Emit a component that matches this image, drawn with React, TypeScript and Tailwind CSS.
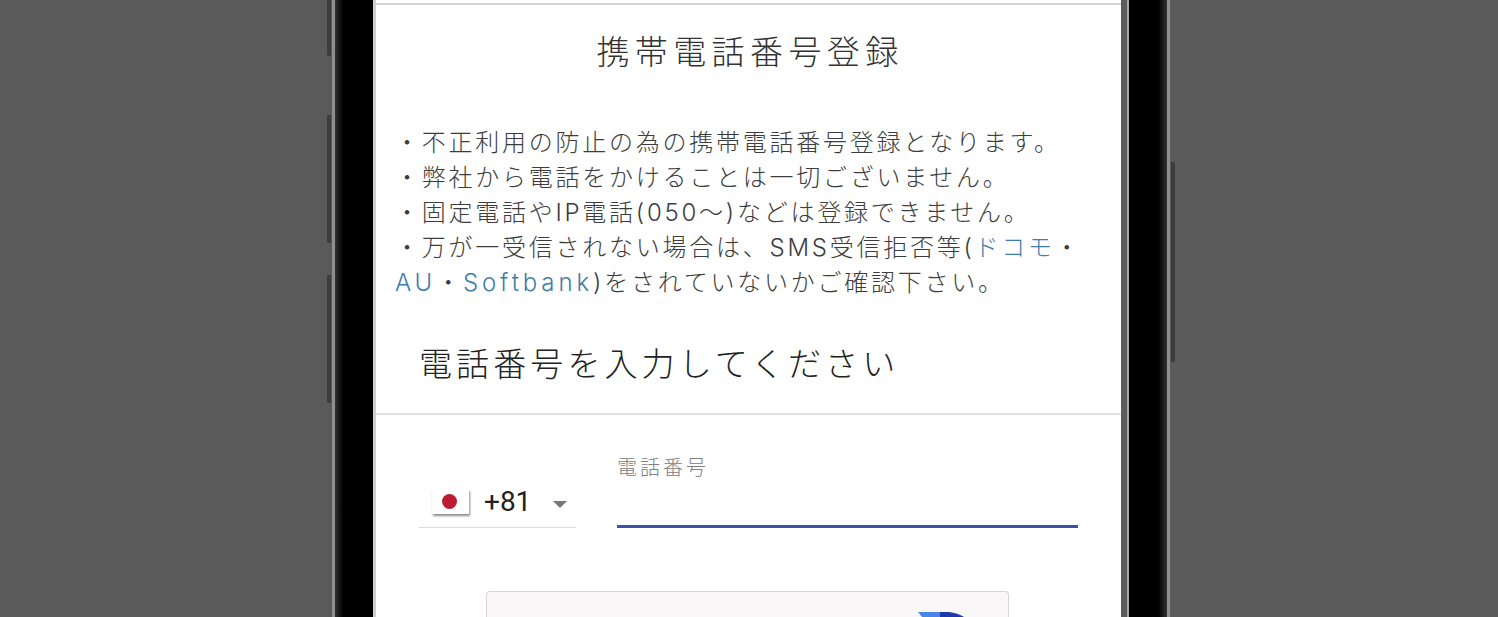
const cjk = "font-['Inter','Noto_Sans_CJK_JP','Noto_Sans',sans-serif]";

function SideKey({ className }: { className: string }) {
  return <div className={`absolute w-[4px] rounded-l-[2px] bg-[#3c3c3c] ${className}`} />;
}

function Notice() {
  return (
    <div className="pl-[19px] pr-[30px] pt-[52px] text-[24px] leading-[34.9px] tracking-[2.75px] text-[#3d3d3d] font-light">
      <p>・不正利用の防止の為の携帯電話番号登録となります。</p>
      <p>・弊社から電話をかけることは一切ございません。</p>
      <p>・固定電話やIP電話(050～)などは登録できません。</p>
      <p>
        ・万が一受信されない場合は、SMS受信拒否等(
        <span className="text-[#3f7cab]">ドコモ</span>・
        <span className="tracking-[3.9px] text-[#3f7cab]">AU</span>・
        <span className="tracking-[3.9px] text-[#3f7cab]">Softbank</span>
        )をされていないかご確認下さい。
      </p>
    </div>
  );
}

function JapanFlag() {
  return (
    <div className="flex h-[25px] w-[37px] items-center justify-center bg-white pr-[2px] shadow-[1px_2px_2px_rgba(0,0,0,0.45)]">
      <div className="h-[15px] w-[15px] rounded-full bg-[#bc1c32]" />
    </div>
  );
}

function PhoneForm() {
  return (
    <div className="flex gap-[41px] px-[43px] pt-[37px]">
      <div className="flex h-[76px] w-[157px] items-end border-b border-[#dcdcdc] pb-[13px] pl-[13px]">
        <JapanFlag />
        <span className="mb-[-3px] ml-[15px] text-[28px] leading-[30px] text-[#222] font-['Roboto',sans-serif]">+81</span>
        <svg className="mb-[6px] ml-[22px]" width="14" height="7" viewBox="0 0 14 7">
          <path d="M0 0h14L7 7z" fill="#777" />
        </svg>
      </div>
      <div className="flex h-[76px] flex-1 flex-col border-b-[3px] border-[#3f51a5] pt-[3px]">
        <span className="text-[20px] leading-[27px] tracking-[3px] text-[#808080] font-light">電話番号</span>
      </div>
    </div>
  );
}

function CaptchaBox() {
  return (
    <div className="ml-[110px] mt-[63px] h-[60px] w-[523px] overflow-hidden rounded-t-[4px] border border-b-0 border-[#d6d6d6] bg-[#f9f7f8] pl-[431px] pt-[20px]">
      <svg width="60" height="40" viewBox="0 0 60 40">
        <path d="M0 0 H22 V20 H16z" fill="#4a86e8" />
        <path d="M22 0 H31 C38 1 44 3 49 7 L40 20 H22z" fill="#1c3aa9" />
      </svg>
    </div>
  );
}

export default function App() {
  return (
    <div className={`h-[617px] overflow-hidden bg-[#5a5a5a] pl-[332px] ${cjk}`}>
      <div className="relative h-full w-[838px]">
        <SideKey className="left-[-5px] top-[-20px] h-[76px]" />
        <SideKey className="left-[-5px] top-[115px] h-[128px]" />
        <SideKey className="left-[-5px] top-[275px] h-[128px]" />
        <SideKey className="right-[-5px] top-[162px] h-[200px] rounded-l-none rounded-r-[2px]" />
        <div className="flex h-full border-x-[3px] border-[#8e8e8e] bg-[linear-gradient(to_right,#333,#000_8px,#000_calc(100%-8px),#333)] pl-[38px] pr-[38px]">
          <div className="w-full border-l-[3px] border-r-[2px] border-l-[#cfcfcf] border-r-[#a8a8a8]">
            <div className="h-full border-r-[6px] border-[#5c5c5c] bg-white">
              <div className="h-[5px] border-b-[2px] border-[#d4d4d4]" />
              <h1 className="pl-[3px] pt-[25px] text-center text-[33px] leading-[44px] tracking-[5.4px] text-[#333] font-light">携帯電話番号登録</h1>
              <Notice />
              <h2 className="pl-[43px] pt-[39px] text-[33px] leading-[48px] tracking-[4.1px] text-[#222] font-light">電話番号を入力してください</h2>
              <div className="mt-[25px] h-[2px] bg-[#e2e2e2]" />
              <PhoneForm />
              <CaptchaBox />
            </div>
          </div>
        </div>
      </div>
    </div>
  );
}
